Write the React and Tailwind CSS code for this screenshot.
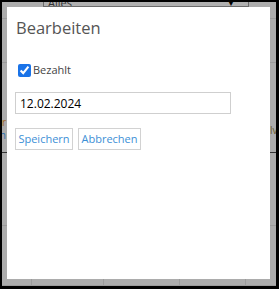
const Cell = ({ className = "", children }) => (
  <div className={`border-r border-b border-[#9b9b9b] ${className}`}>{children}</div>
);

const App = () => {
  return (
    <div
      className="relative w-[279px] h-[289px] overflow-hidden border-l-2 border-t-2 border-r-[3px] border-b-[3px] border-black bg-[#acacac]"
      style={{ fontFamily: '"Open Sans", "Liberation Sans", sans-serif' }}
    >
      {/* page behind the overlay */}
      <div className="ml-[41px] w-[206px] h-[5px] overflow-hidden border-x border-b border-[#6b6b6b] bg-[#b0b0b0] flex items-end justify-between px-[4px]">
        <span className="text-[11px] leading-[11px] text-[#333] -mb-[2px]">Alles</span>
        <span className="text-[8px] leading-[8px] text-black mr-[9px] -mb-[1px]">▼</span>
      </div>
      <div className="grid grid-cols-[30px_72px_76px_66px_30px] grid-rows-[12px_44px_90px_73px_60px]">
        <Cell />
        <Cell />
        <Cell />
        <Cell />
        <Cell className="border-r-0" />
        <Cell />
        <Cell />
        <Cell />
        <Cell />
        <Cell className="border-r-0" />
        <Cell className="border-b-[#333] flex flex-col items-end justify-end gap-[1px] pb-[11px] pr-[25px] text-[10px] leading-[12px]">
          <span className="text-[#a36a1e]">r</span>
          <span className="text-[#2c6fb0]">n</span>
        </Cell>
        <Cell className="border-b-[#333]" />
        <Cell className="border-b-[#333]" />
        <Cell className="border-b-[#333]" />
        <Cell className="border-r-0 border-b-[#333] flex items-end pb-[16px] pl-[24px] text-[10px] leading-[12px] text-[#6b5a2a]">
          lv
        </Cell>
        <Cell />
        <Cell />
        <Cell />
        <Cell />
        <Cell className="border-r-0" />
        <Cell />
        <Cell />
        <Cell />
        <Cell />
        <Cell className="border-r-0" />
      </div>

      {/* modal */}
      <div className="absolute left-[5px] top-[5px] w-[263px] h-[272px] bg-white px-[8px] pt-[8px]">
        <h2 className="text-[16.5px] leading-[25px] text-[#555] ml-[1px]">Bearbeiten</h2>
        <label className="mt-[23px] flex items-center gap-[2px] text-[11px] leading-[14px] text-[#444]">
          <input type="checkbox" defaultChecked className="m-0 ml-[3px] w-[13px] h-[13px] accent-[#1a73e8]" />
          <span>Bezahlt</span>
        </label>
        <input
          type="text"
          defaultValue="12.02.2024"
          className="mt-[15px] block w-[216px] h-[22px] border border-[#cfcfcf] px-[4px] text-[12px] text-black outline-none"
        />
        <div className="mt-[14px] flex gap-[5px]">
          <button className="w-[58px] h-[22px] border border-[#d2d2d2] bg-white text-[11px] text-[#3d8fd6]">
            Speichern
          </button>
          <button className="w-[63px] h-[22px] border border-[#d2d2d2] bg-white text-[11px] text-[#3d8fd6]">
            Abbrechen
          </button>
        </div>
      </div>
    </div>
  );
};

export default App;
